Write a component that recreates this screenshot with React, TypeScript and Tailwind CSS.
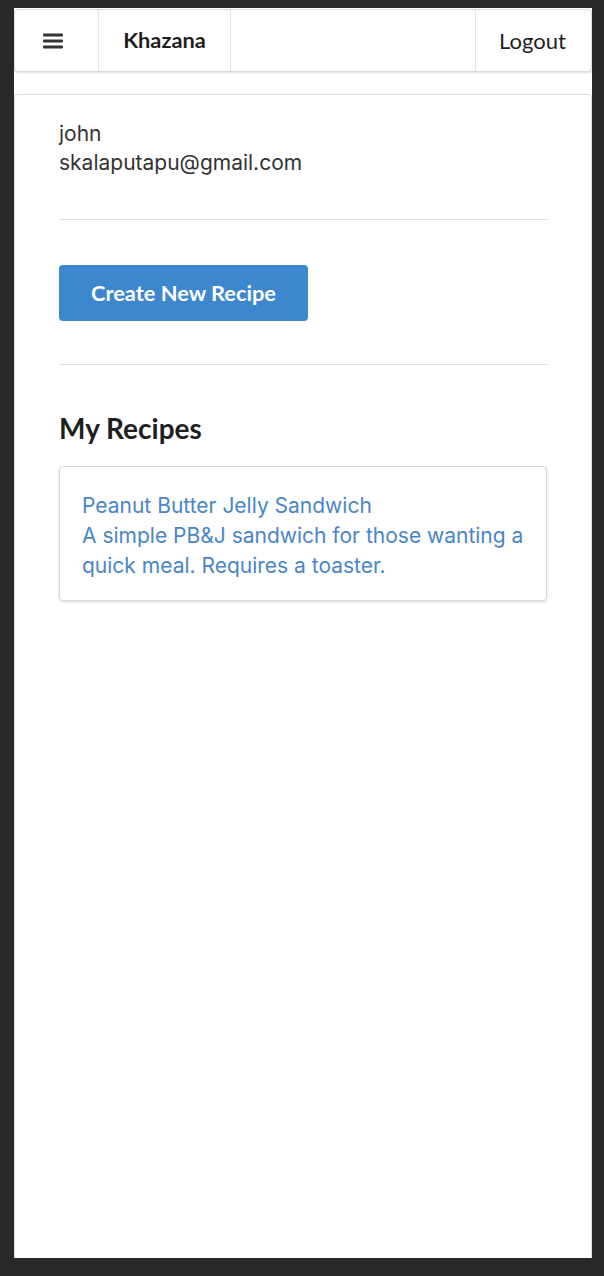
import React from "react";

export default function App() {
  return (
    <div className="w-[604px] h-[1276px] bg-[#282828] pt-[8px] px-[14px] pb-[18px]" style={{ fontFamily: "Lato, 'Noto Sans', sans-serif" }}>
      <div className="h-[1250px] w-[578px] bg-white flex flex-col">
        <nav className="mt-[1px] h-[63px] flex items-stretch border border-[#dcdcdd] rounded-[4px] shadow-[0_1px_2px_rgba(34,36,38,0.15)] bg-white">
          <div className="w-[84px] flex items-center justify-center border-r border-[#e6e6e6]">
            <svg width="20" height="16" viewBox="0 0 20 16" className="ml-[-8px]">
              <rect x="0" y="0.5" width="20" height="3" rx="1" fill="#333" />
              <rect x="0" y="6.5" width="20" height="3" rx="1" fill="#333" />
              <rect x="0" y="12.5" width="20" height="3" rx="1" fill="#333" />
            </svg>
          </div>
          <div className="w-[132px] flex items-center justify-center border-r border-[#e6e6e6] text-[21.8px] font-bold text-[#1f1f1f]">
            Khazana
          </div>
          <div className="flex-1" />
          <div className="w-[116px] flex items-center justify-center border-l border-[#e6e6e6] text-[22px] text-[#1f1f1f] pr-[2px]">
            Logout
          </div>
        </nav>
        <div className="mt-[22px] flex-1 border border-b-0 border-[#dcdcdd] rounded-t-[4px] px-[44px] pt-[24px]">
          <div className="text-[21px] leading-[29px] text-[#333]" style={{ fontFamily: "Inter, 'Noto Sans', sans-serif" }}>
            <div>john</div>
            <div>skalaputapu@gmail.com</div>
          </div>
          <div className="mt-[42px] border-t border-[#e0e0e0]" />
          <button className="mt-[45px] w-[249px] h-[56px] rounded-[4px] bg-[#3d87ce] text-white text-[21.8px] font-bold">
            Create New Recipe
          </button>
          <div className="mt-[43px] border-t border-[#e0e0e0]" />
          <h2 className="mt-[45px] text-[28px] font-bold text-[#1f1f1f] leading-[36px]">My Recipes</h2>
          <div className="mt-[20px] w-[488px] border border-[#d8d8d8] rounded-[4px] shadow-[0_1px_3px_rgba(0,0,0,0.15)] px-[22px] pt-[24px] pb-[19px] text-[#4a86c7] text-[21px] leading-[30px]" style={{ fontFamily: "Inter, 'Noto Sans', sans-serif" }}>
            <div>Peanut Butter Jelly Sandwich</div>
            <div>A simple PB&amp;J sandwich for those wanting a quick meal. Requires a toaster.</div>
          </div>
        </div>
      </div>
    </div>
  );
}
